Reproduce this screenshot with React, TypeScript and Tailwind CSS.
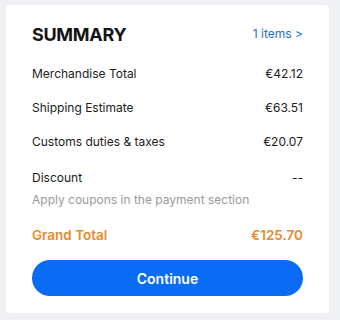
import React from "react";

const rows = [
  { label: "Merchandise Total", value: "€42.12" },
  { label: "Shipping Estimate", value: "€63.51" },
  { label: "Customs duties & taxes", value: "€20.07" },
];

export default function App() {
  return (
    <div
      className="w-[340px] h-[320px] bg-[#eef0f4] pt-[5px] pl-[6px]"
      style={{ fontFamily: "Inter, 'Noto Sans', sans-serif" }}
    >
      <div className="w-[323px] h-[308px] bg-white rounded-[4px] px-[26px] pt-[15px]">
        <div className="flex items-center justify-between h-[28px]">
          <div className="text-[18px] font-bold text-[#141414] tracking-[-0.3px]">SUMMARY</div>
          <div className="text-[12px] text-[#1f6fd1]">1 items &gt;</div>
        </div>
        <div className="mt-[9px] flex flex-col">
          {rows.map((r) => (
            <div key={r.label} className="flex items-center justify-between h-[34px] text-[12px] text-[#1b1b1b]">
              <span>{r.label}</span>
              <span>{r.value}</span>
            </div>
          ))}
          <div className="flex items-center justify-between h-[37px] text-[12px] text-[#1b1b1b]">
            <span>Discount</span>
            <span>--</span>
          </div>
          <div className="text-[12px] text-[#9a9a9a] leading-[16px] -mt-[4px]">Apply coupons in the payment section</div>
          <div className="flex items-center justify-between mt-[17px] text-[13.5px] font-semibold text-[#e88a2b]">
            <span>Grand Total</span>
            <span>€125.70</span>
          </div>
          <button className="mt-[15px] h-[36px] w-full rounded-full bg-[#0a6cf5] text-white text-[14px] font-semibold">
            Continue
          </button>
        </div>
      </div>
    </div>
  );
}
